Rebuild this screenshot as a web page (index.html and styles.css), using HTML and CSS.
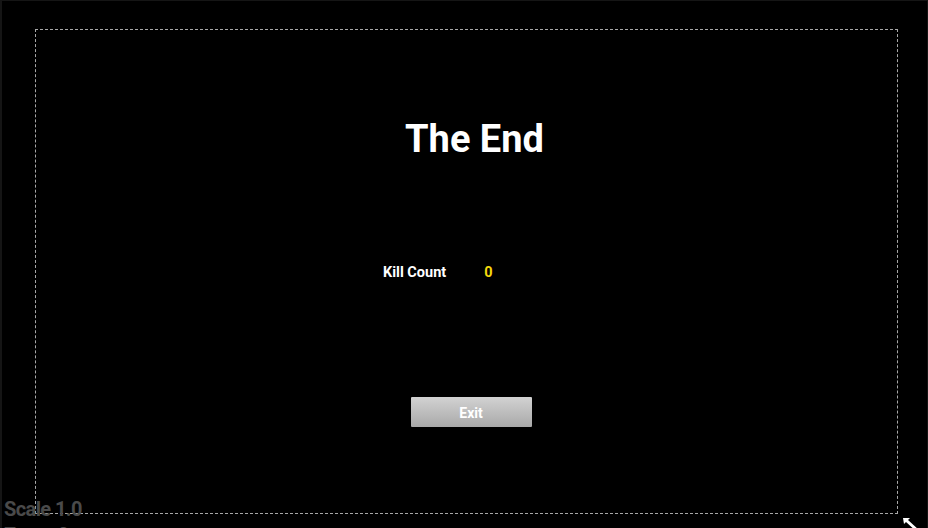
FILE: index.html
```html
<!DOCTYPE html>
<html>
<head>
<meta charset="utf-8">
<link rel="stylesheet" href="styles.css">
</head>
<body>
<div class="viewport">
  <div class="canvas">
    <h1 class="title">The End</h1>
    <div class="stats">
      <span class="label">Kill Count</span>
      <span class="value">0</span>
    </div>
    <button class="exit">Exit</button>
  </div>
  <div class="info">
    <div class="info-line">Scale 1.0</div>
    <div class="info-line">Zoom 0</div>
  </div>
  <svg class="resize" width="22" height="16" viewBox="0 0 22 16">
    <path d="M2 2 L9 2 L7 4 L18 14 L16 16 L5 6 L3 8 Z" fill="#fff"/>
  </svg>
</div>
</body>
</html>
```
FILE: styles.css
```css
html, body {
  margin: 0;
  padding: 0;
  background: #000;
  width: 928px;
  height: 528px;
  overflow: hidden;
}
.viewport {
  position: relative;
  width: 928px;
  height: 528px;
  box-sizing: border-box;
  border-left: 2px solid #151515;
  border-top: 1px solid #151515;
  border-right: 1px solid #151515;
  padding: 28px 30px 0 33px;
  font-family: Roboto, "Liberation Sans", sans-serif;
}
.canvas {
  width: 863px;
  height: 485px;
  box-sizing: border-box;
  border: 1px dashed #a8a8a8;
  display: flex;
  flex-direction: column;
  align-items: center;
}
.title {
  margin: 86px 0 0 0;
  padding-left: 16px;
  color: #fff;
  font-size: 38px;
  font-weight: 700;
  line-height: 46px;
}
.stats {
  align-self: flex-start;
  margin-top: 101px;
  margin-left: 347px;
  display: flex;
  align-items: center;
  gap: 38px;
  font-size: 14.5px;
  font-weight: 700;
  line-height: 20px;
}
.label { color: #fff; }
.value { color: #f4d80c; }
.exit {
  margin-top: 114px;
  margin-left: 9px;
  width: 121px;
  height: 30px;
  border: none;
  border-radius: 1px;
  background: linear-gradient(#d2d2d2, #a9a9a9);
  color: #fff;
  font-family: Roboto, "Liberation Sans", sans-serif;
  font-weight: 700;
  font-size: 14px;
  padding: 2px 0 0 0;
}
.info {
  position: absolute;
  left: 2px;
  top: 495px;
  color: #4a4a4a;
  font-family: Roboto, "Liberation Sans", sans-serif;
  font-size: 20px;
  font-weight: 700;
  line-height: 26px;
  letter-spacing: -0.6px;
}
.resize {
  position: absolute;
  left: 899px;
  top: 515px;
}
```
